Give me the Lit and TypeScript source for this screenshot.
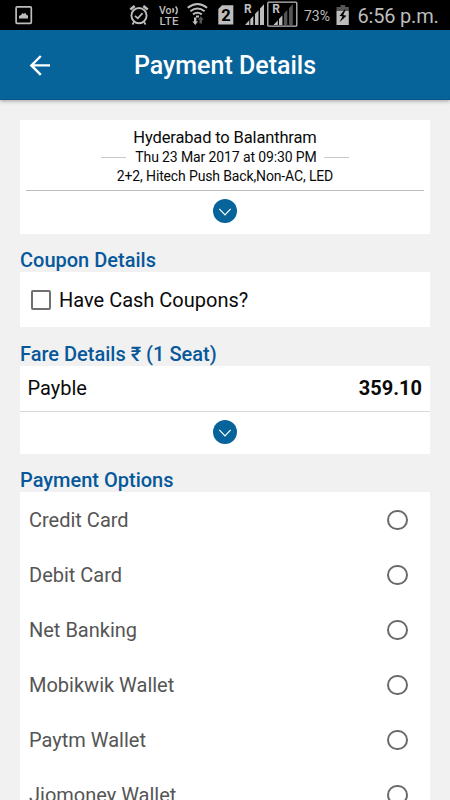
import { LitElement, html, css } from "lit";
import { customElement, property } from "lit/decorators.js";

@customElement("status-bar")
class StatusBar extends LitElement {
  static styles = css`
    :host { display: flex; height: 30px; background: #000; color: #bdbdbd; font-family: Roboto, sans-serif; }
    svg { display: block; flex: none; height: 30px; fill: #bdbdbd; }
    .gap { flex: none; width: 82px; }
    .pct { flex: none; width: 31px; font-size: 14px; line-height: 32px; white-space: nowrap; }
    .clock { flex: none; font-size: 20px; letter-spacing: -0.2px; line-height: 33px; margin-left: 6.5px; white-space: nowrap; }
    .line { fill: none; stroke: #bdbdbd; }
    .dim { fill: #555; }
    .dark { fill: #000; }
    .r { font: 700 12px Roboto, sans-serif; }
    .small { font: 500 10.5px Roboto, sans-serif; }
    .lte { font: 500 11.5px Roboto, sans-serif; }
    .num { font: 700 16.5px Roboto, sans-serif; fill: #000; }
  `;
  render() {
    return html`
      <svg width="45" viewBox="0 0 45 30">
        <rect class="line" x="16.1" y="6.9" width="15.2" height="16.4" rx="1" stroke-width="1.7" />
        <path d="M19 18.5v-2.5l2-1 1.5-2 1.3 1 1.3-1.2 1.5 2.2 1.4.6v2.9z" />
      </svg>
      <div class="gap"></div>
      <svg width="28" viewBox="127 0 28 30">
        <circle class="line" cx="139" cy="15.6" r="7.6" stroke-width="1.9" />
        <path class="line" d="M135 15.8l2.8 2.6 4.8-5.3" stroke-width="1.7" />
        <path class="line" d="M130.3 9.6l4.4-3.6M147.7 9.6l-4.4-3.6" stroke-width="2.6" />
        <path class="line" d="M134 22l-1.6 2.5M144 22l1.6 2.5" stroke-width="1.7" />
      </svg>
      <svg width="30" viewBox="155 0 30 30">
        <text class="small" x="159" y="14">Vo</text>
        <path class="line" d="M172.6 8.2q1.8 2.1 0 4.4M175.6 6.4q3.4 3.8 0 7.8" stroke-width="1.5" />
        <text class="lte" x="159.5" y="25.2" textLength="19">LTE</text>
      </svg>
      <svg width="30" viewBox="185 0 30 30">
        <path class="line" d="M187.7 7.8q9.8-7.6 19.4 0M190.4 11.2q7-5.4 14.2 0M193 14.4q4.4-3.4 8.8 0" stroke-width="2" />
        <path d="M194 17.5h2.4v4h1.7l-2.9 3.5-2.9-3.5h1.7zM196 15.5h3v2h-3z" />
        <path class="dim" d="M199.5 23.5v-3.7h-1.6l2.9-3.5 2.9 3.5H202v3.7z" />
      </svg>
      <svg width="28" viewBox="215 0 28 30">
        <path d="M222 5.2h11.3v19.3h-15V9z" />
        <text class="num" x="221.3" y="21">2</text>
      </svg>
      <svg width="23" viewBox="243 0 23 30">
        <text class="r" x="244" y="13.3">R</text>
        <path d="M245 25l4.3-4.8V25zM250.3 19.2l3-3.3V25h-3zM255 14l3.5-3.8V25H255zM260 8.6l4-4.4V25h-4z" />
      </svg>
      <svg width="38" viewBox="266 0 38 30">
        <rect class="line" x="267.8" y="2.2" width="29" height="24" rx="1" stroke-width="1.3" />
        <text class="r" x="272.2" y="13.3">R</text>
        <path d="M273.5 25l4.3-4.8V25zM279 19l3.4-3.7V25H279z" />
        <path class="dim" d="M284 13.6l3.3-3.6V25H284zM289 8.2l3.8-4.2V25H289z" />
      </svg>
      <div class="pct">73%</div>
      <svg width="16" viewBox="335 0 16 30">
        <path class="dim" d="M340.5 5h4.7v2h3.6v4H336.5V7h4z" />
        <path d="M336.5 11h12.3v14h-12.3z" />
        <path class="dark" d="M344.7 9.5l-5.2 6.5 3 .3-3 6 7-6.5-3.3-.7 2.4-5z" />
      </svg>
      <div class="clock">6:56 p.m.</div>
    `;
  }
}

@customElement("app-header")
class AppHeader extends LitElement {
  static styles = css`
    :host { display: grid; grid-template-columns: 60px 1fr 60px; align-items: center; height: 70px; box-sizing: border-box;
      background: #07649b; border-bottom: 1px solid #05568a; color: #fff; box-shadow: 0 1px 4px rgba(0,0,0,.35); }
    svg { display: block; margin-left: 29px; }
    .title { text-align: center; font: 500 25px/69px Roboto, sans-serif; padding-top: 1px; height: 68px; }
  `;
  render() {
    return html`
      <svg width="22" height="22" viewBox="0 0 22 22" fill="none" stroke="#fff" stroke-width="2.4">
        <path d="M21 11.4H3M11.8 2L2.4 11.4l9.4 9.4" />
      </svg>
      <div class="title">Payment Details</div>
    `;
  }
}

@customElement("expand-button")
class ExpandButton extends LitElement {
  static styles = css`
    :host { display: block; width: 24px; height: 24px; }
    svg { display: block; }
  `;
  render() {
    return html`<svg width="24" height="24" viewBox="0 0 24 24">
      <circle cx="12" cy="12" r="12" fill="#07649b" />
      <path d="M6.3 9.8l5.7 6 5.7-6" fill="none" stroke="#fff" stroke-width="1.2" />
    </svg>`;
  }
}

@customElement("payment-option")
class PaymentOption extends LitElement {
  @property() label = "";
  static styles = css`
    :host { display: flex; align-items: center; justify-content: space-between; height: 55px; padding: 0 22.5px 0 9px;
      font: 400 20px/55px Roboto, sans-serif; color: #555; }
    .radio { box-sizing: border-box; width: 20.4px; height: 20.4px; margin-bottom: 1px; border: 2.4px solid #6a6a6a; border-radius: 50%; }
  `;
  render() {
    return html`<span>${this.label}</span><span class="radio"></span>`;
  }
}

@customElement("app-root")
class AppRoot extends LitElement {
  private options = ["Credit Card", "Debit Card", "Net Banking", "Mobikwik Wallet", "Paytm Wallet", "Jiomoney Wallet"];
  static styles = css`
    :host { display: flex; flex-direction: column; height: 800px; overflow: hidden; background: #f1f1f1;
      font-family: Roboto, sans-serif; color: #0a0a0a; }
    status-bar, app-header { flex: none; }
    main { flex: 1; min-height: 0; overflow: hidden; padding: 20px 20px 0; }
    app-header { position: relative; }
    .card { background: #fff; }
    .trip { height: 114px; box-sizing: border-box; padding-top: 7px; text-align: center; }
    .route { font-size: 16.5px; letter-spacing: -0.15px; line-height: 21px; height: 20px; }
    .when { display: flex; justify-content: center; align-items: center; gap: 9px; font-size: 14px; letter-spacing: -0.12px;
      line-height: 20px; padding-left: 0; }
    .dash { width: 25px; height: 1px; background: #c8c8c8; }
    .dash:last-child { margin-left: -2px; }
    .bus { font-size: 14px; letter-spacing: -0.14px; line-height: 19px; height: 20px; }
    .rule { height: 1px; background: #bdbdbd; margin: 3px 6px 8px; }
    expand-button { margin: 0 auto; }
    h2 { margin: 0; font-size: 20px; font-weight: 500; line-height: 24px; color: #07589b; }
    .coupon-title { padding-top: 14px; }
    .coupon { display: flex; align-items: center; height: 55px; padding-left: 11px; font-size: 20px; gap: 8px; }
    .box { box-sizing: border-box; width: 20px; height: 20px; border: 2px solid #707070; border-radius: 2px; }
    .fare-title { padding-top: 15px; }
    .fare { height: 88px; }
    .row { display: flex; justify-content: space-between; align-items: center; box-sizing: border-box; height: 46px;
      padding: 0 8px 1px 7.5px; border-bottom: 1px solid #d8d8d8; font-size: 20px; margin-bottom: 8px; }
    .amount { font-weight: 700; }
    .options-title { padding-top: 14px; }
    .list { padding-top: 1px; }
  `;
  render() {
    return html`
      <status-bar></status-bar>
      <app-header></app-header>
      <main>
        <section class="card trip">
          <div class="route">Hyderabad to Balanthram</div>
          <div class="when"><span class="dash"></span><span>Thu 23 Mar 2017 at 09:30 PM</span><span class="dash"></span></div>
          <div class="bus">2+2, Hitech Push Back,Non-AC, LED</div>
          <div class="rule"></div>
          <expand-button></expand-button>
        </section>
        <h2 class="coupon-title">Coupon Details</h2>
        <section class="card coupon"><span class="box"></span><span>Have Cash Coupons?</span></section>
        <h2 class="fare-title">Fare Details ₹ (1 Seat)</h2>
        <section class="card fare">
          <div class="row"><span>Payble</span><span class="amount">359.10</span></div>
          <expand-button></expand-button>
        </section>
        <h2 class="options-title">Payment Options</h2>
        <section class="card list">
          ${this.options.map((o) => html`<payment-option label=${o}></payment-option>`)}
        </section>
      </main>
    `;
  }
}
